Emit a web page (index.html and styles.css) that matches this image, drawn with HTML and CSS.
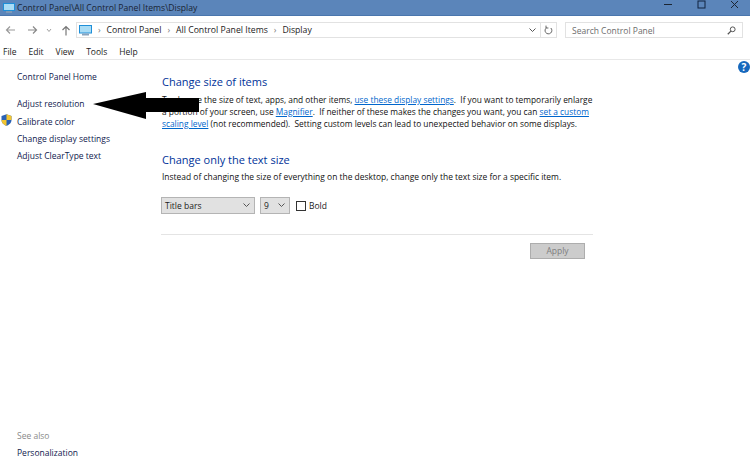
FILE: index.html
```html
<!DOCTYPE html>
<html>
<head>
    <meta charset="UTF-8">
    <title>Display</title>
    <link rel="stylesheet" href="styles.css">
</head>
<body>
    <div class="titlebar">
        <svg class="monitor-small" width="12" height="10" viewBox="0 0 12 10">
            <rect x="0" y="0" width="12" height="8" fill="#1f8fd8"/>
            <rect x="1" y="1" width="10" height="6" fill="#a9dcf5"/>
            <rect x="3" y="8" width="6" height="2" fill="#7f99b5"/>
        </svg>
        <span class="title-text">Control Panel\All Control Panel Items\Display</span>
        <div class="winbtns">
            <svg width="9" height="9" viewBox="0 0 9 9"><path d="M0 4.5H8" stroke="#1b2533" stroke-width="1"/></svg>
            <svg width="9" height="9" viewBox="0 0 9 9"><rect x="1" y="1" width="7" height="7" fill="none" stroke="#10233f" stroke-width="1"/></svg>
            <svg width="9" height="9" viewBox="0 0 9 9"><path d="M1 1L8 8M8 1L1 8" stroke="#1b2533" stroke-width="1"/></svg>
        </div>
    </div>
    <div class="toolbar">
        <div class="navbtns">
            <svg width="11" height="10" viewBox="0 0 11 10"><path d="M10 5H1.5M5 1.5L1.5 5L5 8.5" fill="none" stroke="#9a9a9a" stroke-width="1.2"/></svg>
            <svg width="11" height="10" viewBox="0 0 11 10"><path d="M1 5H9.5M6 1.5L9.5 5L6 8.5" fill="none" stroke="#8a8a8a" stroke-width="1.2"/></svg>
            <svg width="6" height="5" viewBox="0 0 6 5"><path d="M1 1L3 3.5L5 1" fill="none" stroke="#a0a0a0" stroke-width="1"/></svg>
            <svg width="10" height="11" viewBox="0 0 10 11"><path d="M5 10.5V1.5M1.5 5L5 1.5L8.5 5" fill="none" stroke="#777" stroke-width="1.2"/></svg>
        </div>
        <div class="address">
            <svg width="13" height="11" viewBox="0 0 13 11">
                <rect x="0" y="0" width="13" height="8.5" fill="#1f8fd8"/>
                <rect x="1" y="1" width="11" height="6.5" fill="#a9dcf5"/>
                <rect x="3" y="8.5" width="7" height="2" fill="#8aa3bd"/>
            </svg>
            <span class="crumb-sep">›</span>
            <span>Control Panel</span>
            <span class="crumb-sep">›</span>
            <span>All Control Panel Items</span>
            <span class="crumb-sep">›</span>
            <span>Display</span>
            <svg class="addr-drop" width="7" height="5" viewBox="0 0 7 5"><path d="M0.5 0.5L3.5 3.5L6.5 0.5" fill="none" stroke="#555" stroke-width="1"/></svg>
            <div class="refresh">
                <svg width="9" height="10" viewBox="0 0 9 10"><path d="M6.8 3A3.4 3.4 0 1 1 2.6 2.6M2 0.6V3H4.4" fill="none" stroke="#666" stroke-width="1"/></svg>
            </div>
        </div>
        <div class="search">
            <span>Search Control Panel</span>
            <svg width="9" height="9" viewBox="0 0 9 9"><circle cx="5.7" cy="3.3" r="2.4" fill="none" stroke="#555" stroke-width="1"/><path d="M3.9 5.1L0.8 8.2" stroke="#555" stroke-width="1.3"/></svg>
        </div>
    </div>
    <div class="menubar">
        <span>File</span>
        <span>Edit</span>
        <span>View</span>
        <span>Tools</span>
        <span>Help</span>
    </div>
    <div class="main">
        <div class="sidebar">
            <a class="side-home">Control Panel Home</a>
            <a class="side-link">Adjust resolution</a>
            <a class="side-link side-shield">
                <svg class="shield" width="11" height="12" viewBox="0 0 11 12">
                    <path d="M5.5 0.3L10.5 2V6C10.5 9 8 10.8 5.5 11.8C3 10.8 0.5 9 0.5 6V2Z" fill="#2b62b5"/>
                    <path d="M5.5 0.3L10.5 2V6H5.5ZM5.5 6V11.8C3 10.8 0.5 9 0.5 6Z" fill="#f3c52f"/>
                </svg>
                Calibrate color
            </a>
            <a class="side-link">Change display settings</a>
            <a class="side-link">Adjust ClearType text</a>
            <div class="side-bottom">
                <div class="see-also">See also</div>
                <a class="side-link">Personalization</a>
            </div>
        </div>
        <div class="content">
            <h2>Change size of items</h2>
            <p class="intro">To change the size of text, apps, and other items, <a>use these display settings</a>.&nbsp; If you want to temporarily enlarge<br>a portion of your screen, use <a>Magnifier</a>.&nbsp; If neither of these makes the changes you want, you can <a>set a custom</a><br><a>scaling level</a> (not recommended).&nbsp; Setting custom levels can lead to unexpected behavior on some displays.</p>
            <h2 class="second">Change only the text size</h2>
            <p>Instead of changing the size of everything on the desktop, change only the text size for a specific item.</p>
            <div class="controls">
                <div class="select select-item">Title bars
                    <svg width="7" height="5" viewBox="0 0 7 5"><path d="M0.5 0.5L3.5 3.5L6.5 0.5" fill="none" stroke="#555" stroke-width="1"/></svg>
                </div>
                <div class="select select-size">9
                    <svg width="7" height="5" viewBox="0 0 7 5"><path d="M0.5 0.5L3.5 3.5L6.5 0.5" fill="none" stroke="#555" stroke-width="1"/></svg>
                </div>
                <span class="checkbox"></span>
                <span class="bold-label">Bold</span>
            </div>
            <div class="apply-row">
                <div class="apply">Apply</div>
            </div>
        </div>
        <div class="help">?</div>
    </div>
    <!-- arrow drawn over the page -->
    <svg class="arrow" width="107" height="28" viewBox="0 0 107 28">
        <polygon points="0,12 53,0 53,6 106,6 106,20 53,20 53,27" fill="#000"/>
    </svg>
</body>
</html>
```

FILE: styles.css
```css
html, body {
    margin: 0;
    padding: 0;
}
body {
    position: relative;
    width: 750px;
    height: 466px;
    overflow: hidden;
    background-color: #ffffff;
    font-family: "Open Sans", "Noto Sans", sans-serif;
    font-size: 8.5px;
    color: #1a1a1a;
}
p, h2 {
    margin: 0;
}
.titlebar {
    display: flex;
    align-items: center;
    height: 15px;
    background-color: #5b85ba;
    border-bottom: 1px solid #4a76ad;
    color: #1a2433;
    font-size: 8.6px;
}
.monitor-small {
    margin-left: 3px;
}
.title-text {
    margin-left: 2px;
}
.winbtns {
    display: flex;
    gap: 24px;
    margin-left: auto;
    margin-right: 11px;
    margin-bottom: 6px;
}
.toolbar {
    display: flex;
    align-items: center;
    height: 28px;
    box-sizing: border-box;
}
.navbtns {
    display: flex;
    align-items: center;
    width: 76px;
    box-sizing: border-box;
    padding-left: 5px;
}
.navbtns svg:nth-child(1) {
    margin-right: 11px;
}
.navbtns svg:nth-child(2) {
    margin-right: 8px;
}
.navbtns svg:nth-child(3) {
    margin-right: 9px;
}
.address {
    display: flex;
    align-items: center;
    gap: 6px;
    width: 481px;
    height: 16px;
    box-sizing: border-box;
    border: 1px solid #e2e2e2;
    padding-left: 2px;
    color: #222222;
    font-size: 8.7px;
}
.crumb-sep {
    color: #777777;
}
.addr-drop {
    margin-left: auto;
    margin-right: -2px;
}
.refresh {
    display: flex;
    align-items: center;
    justify-content: center;
    width: 15px;
    height: 14px;
    border-left: 1px solid #e2e2e2;
}
.search {
    display: flex;
    align-items: center;
    justify-content: space-between;
    width: 178px;
    height: 16px;
    box-sizing: border-box;
    margin-left: 8px;
    border: 1px solid #e2e2e2;
    padding: 0 6px 0 6px;
    color: #6d6d6d;
}
.menubar {
    display: flex;
    gap: 12px;
    align-items: center;
    height: 15px;
    padding-left: 3px;
    border-bottom: 1px solid #e8e8e8;
    color: #222222;
}
.main {
    position: relative;
    display: flex;
    height: 406px;
}
.sidebar {
    display: flex;
    flex-direction: column;
    width: 144px;
    padding-left: 17px;
    padding-top: 8px;
}
.sidebar a {
    display: block;
    height: 17.3px;
    line-height: 17px;
    color: #10204e;
}
.side-home {
    margin-bottom: 10px;
}
.side-shield {
    position: relative;
}
.shield {
    position: absolute;
    left: -16px;
    top: 1px;
}
.side-bottom {
    margin-top: auto;
    padding-bottom: 5px;
}
.see-also {
    height: 17px;
    line-height: 17px;
    color: #8a8a8a;
}
.content {
    width: 432px;
    padding-top: 13px;
}
.content h2 {
    padding-left: 1px;
    font-size: 11px;
    font-weight: 400;
    line-height: 17px;
    color: #003399;
}
.content h2.second {
    margin-top: 22px;
}
.content p {
    margin-top: 3px;
    padding-left: 1px;
    line-height: 11.8px;
    color: #111111;
    font-size: 8.45px;
}
.content p.intro {
    margin-top: 4px;
    font-size: 8.35px;
    white-space: nowrap;
}
.content p a {
    color: #0066cc;
    text-decoration: underline;
}
.controls {
    display: flex;
    align-items: center;
    margin-top: 14px;
    height: 17px;
}
.select {
    display: flex;
    align-items: center;
    justify-content: space-between;
    height: 17px;
    box-sizing: border-box;
    border: 1px solid #b4b4b4;
    background-color: #e1e1e1;
    padding: 0 4px 0 3px;
    color: #222222;
}
.select-item {
    width: 94px;
}
.select-size {
    width: 30px;
    margin-left: 5px;
}
.checkbox {
    width: 8px;
    height: 8px;
    margin-left: 6px;
    border: 1px solid #333333;
    background-color: #ffffff;
}
.bold-label {
    margin-left: 3px;
}
.apply-row {
    display: flex;
    justify-content: flex-end;
    margin-top: 20px;
    padding-right: 8px;
    padding-top: 8px;
    border-top: 1px solid #e4e4e4;
}
.apply {
    width: 55px;
    height: 16px;
    box-sizing: border-box;
    border: 1px solid #adadad;
    background-color: #cccccc;
    line-height: 14px;
    text-align: center;
    color: #7d7d7d;
}
.help {
    position: absolute;
    right: 0;
    top: 1px;
    width: 12px;
    height: 12px;
    border-radius: 6px;
    background-color: #1668bd;
    color: #ffffff;
    font-weight: 700;
    font-size: 10px;
    line-height: 12px;
    text-align: center;
}
.arrow {
    position: absolute;
    left: 93px;
    top: 92px;
}
```
